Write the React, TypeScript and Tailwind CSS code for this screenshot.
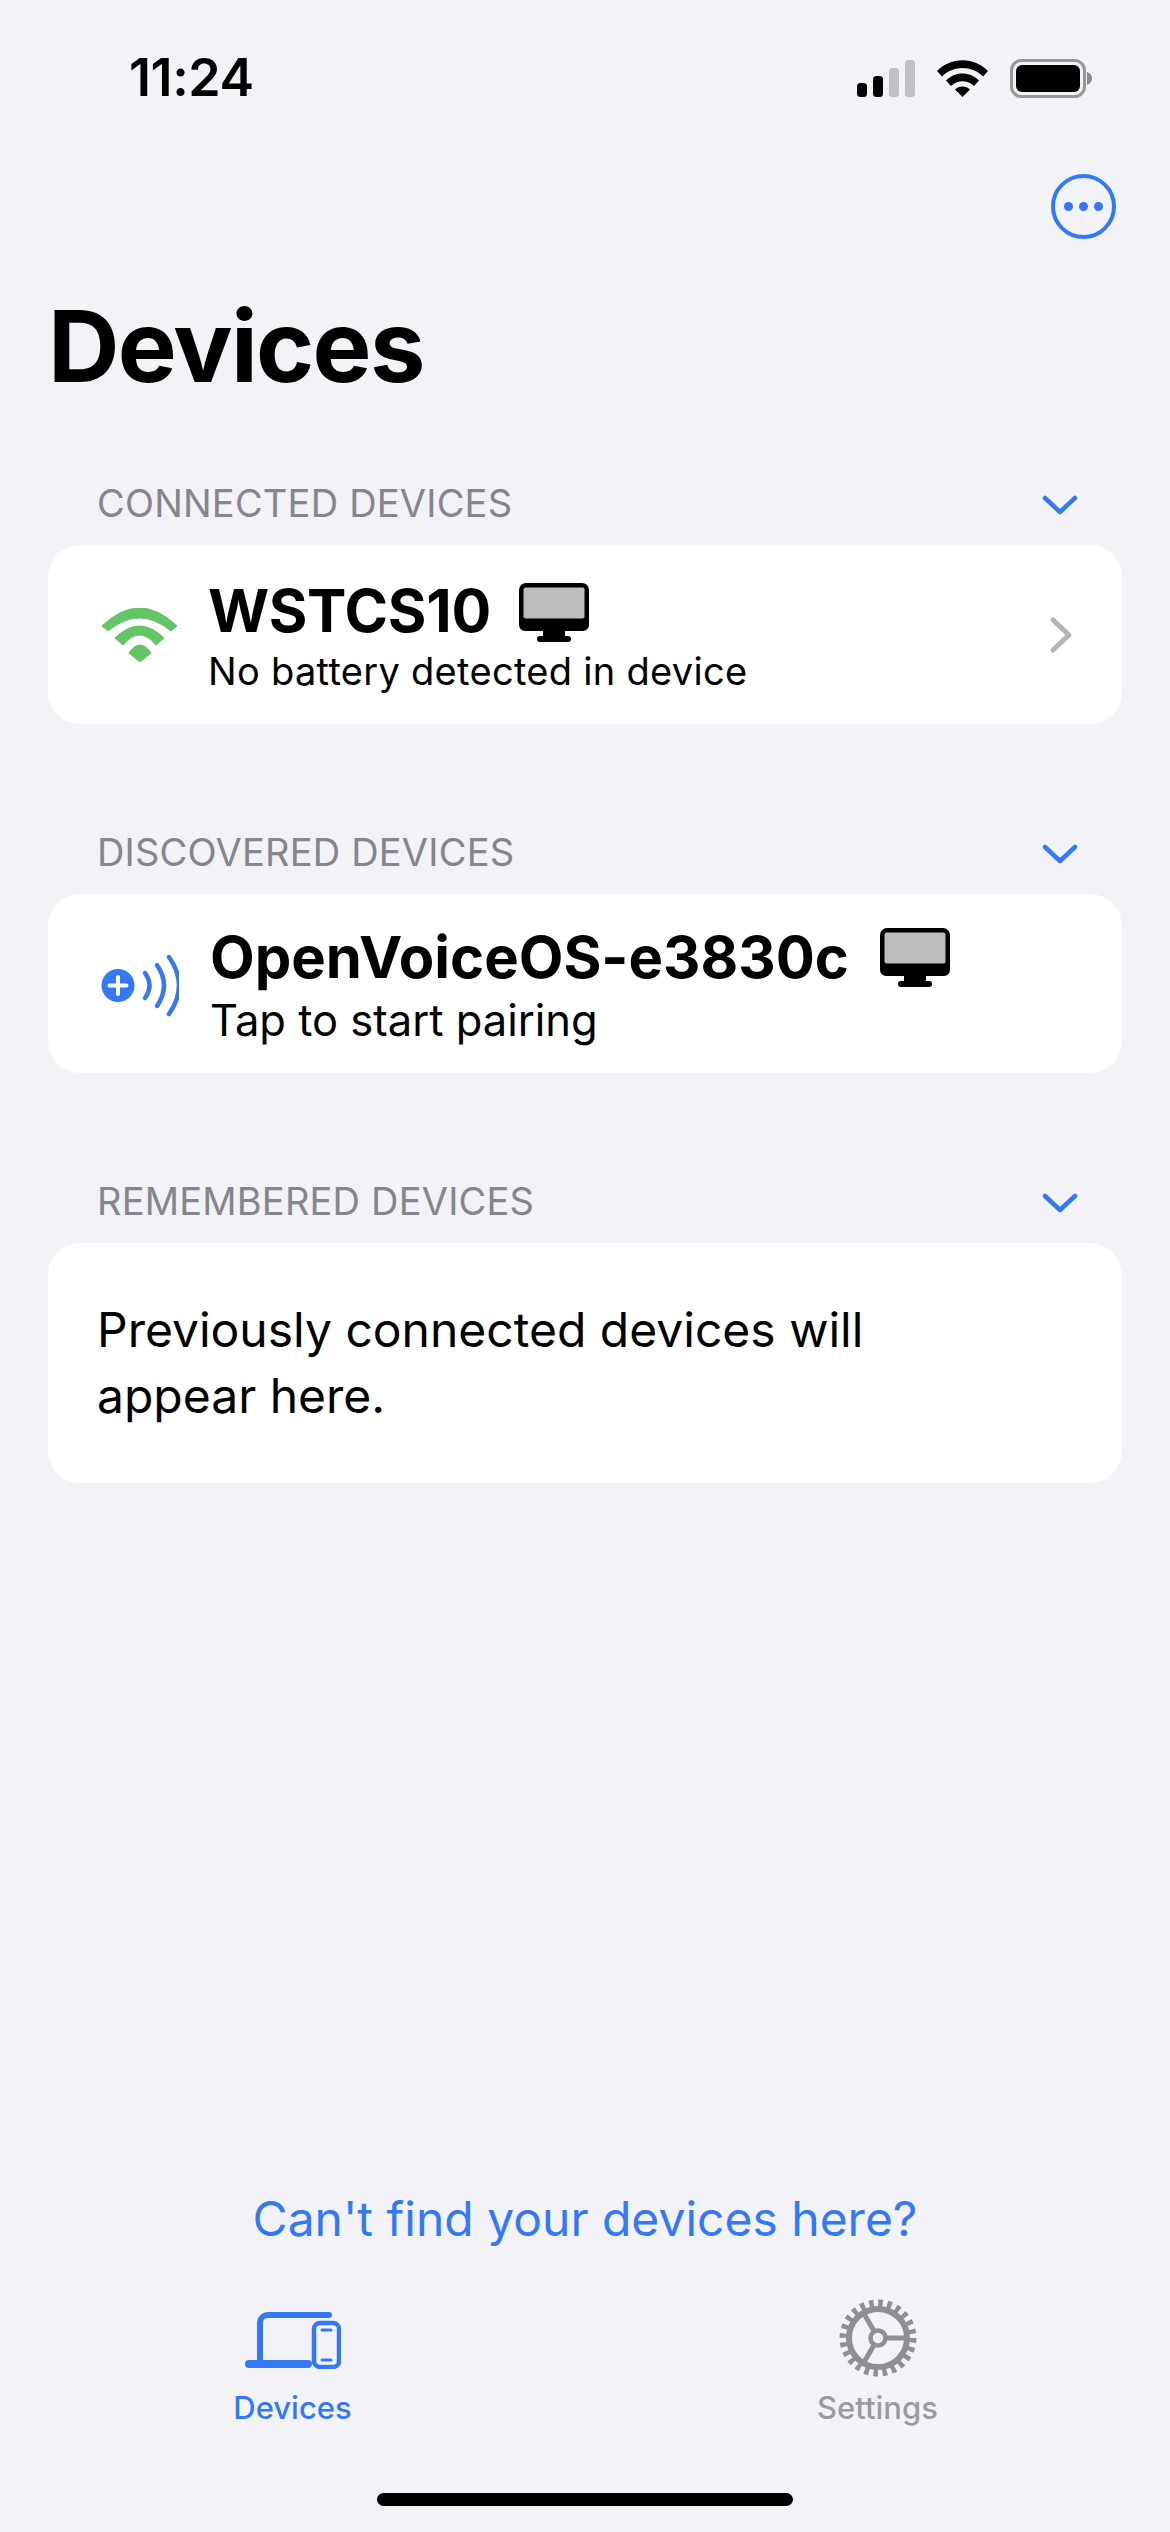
const BLUE = "#3478f6";

function Monitor({ className }: { className: string }) {
  return (
    <svg viewBox="0 0 70 59" className={className}>
      <path d="M7 0H63A7 7 0 0 1 70 7V42A6 6 0 0 1 64 48H46V53H49A3 3 0 0 1 49 59H21A3 3 0 0 1 21 53H24V48H6A6 6 0 0 1 0 42V7A7 7 0 0 1 7 0Z" fill="#000" />
      <rect x="4.500" y="4.500" width="61" height="31" rx="2" fill="#bdbdbd" />
    </svg>
  );
}

function Chevron() {
  return (
    <svg viewBox="0 0 36 22" className="w-[36px] h-[22px] mt-[4px]" fill="none" stroke={BLUE} strokeWidth="4.500" strokeLinecap="round" strokeLinejoin="round">
      <path d="M3 4L18 18L33 4" />
    </svg>
  );
}

function Section({ title, children }: { title: string; children: React.ReactNode }) {
  return (
    <section className="mx-[48px]">
      <div className="flex items-center justify-between pl-[49px] pr-[44px] h-[60px]">
        <span className="text-[38px] leading-[46px] text-[#85858b] tracking-[0.2px]">{title}</span>
        <Chevron />
      </div>
      <div className="bg-white rounded-[32px] mt-[12px]">{children}</div>
    </section>
  );
}

export default function App() {
  return (
    <div
      className="w-[1170px] h-[2532px] bg-[#f2f2f7] flex flex-col text-black overflow-hidden"
      style={{ fontFamily: "Inter, 'Noto Sans', sans-serif" }}
    >
      <header className="flex items-center justify-between h-[156px] pl-[129px] pr-[78px] shrink-0">
        <span className="text-[52px] leading-[60px] font-semibold tracking-[-0.4px]">11:24</span>
        <div className="flex items-center gap-[22px]">
          <svg viewBox="0 0 58 37" className="w-[58px] h-[37px]">
            <rect x="0" y="23" width="10" height="14" rx="3.500" fill="#000" />
            <rect x="16" y="16" width="10" height="21" rx="3.500" fill="#000" />
            <rect x="32" y="8" width="10" height="29" rx="3.500" fill="#c0c0c5" />
            <rect x="48" y="0" width="10" height="37" rx="3.500" fill="#c0c0c5" />
          </svg>
          <svg viewBox="0 0 51 37" className="w-[51px] h-[37px]">
            <path d="M0 11C14 -3.500 37 -3.500 51 11L46 16.500C35 5 16 5 5 16.500Z" fill="#000" />
            <path d="M9 20.500C18 11 33 11 42 20.500L37 26C31 19.500 20 19.500 14 26Z" fill="#000" />
            <path d="M18 29.500C22 25.500 29 25.500 33 29.500L25.500 37Z" fill="#000" />
          </svg>
          <svg viewBox="0 0 82 39" className="w-[82px] h-[39px]">
            <rect x="1.500" y="1.500" width="73" height="36" rx="10" fill="none" stroke="#98989a" strokeWidth="3" />
            <rect x="6" y="6" width="64" height="27" rx="6" fill="#000" />
            <path d="M77 13C80 14 82 16.500 82 19.500C82 22.500 80 25 77 26Z" fill="#8a8a8c" />
          </svg>
        </div>
      </header>

      <div className="flex justify-end pr-[54px] pt-[18px] shrink-0">
        <svg viewBox="0 0 65 65" className="w-[65px] h-[65px]">
          <circle cx="32.500" cy="32.500" r="30.500" fill="none" stroke={BLUE} strokeWidth="4" />
          <circle cx="17.500" cy="32.500" r="4.500" fill={BLUE} />
          <circle cx="32.500" cy="32.500" r="4.500" fill={BLUE} />
          <circle cx="47.500" cy="32.500" r="4.500" fill={BLUE} />
        </svg>
      </div>

      <h1 className="pl-[48px] mt-[45px] text-[99px] leading-[124px] font-bold tracking-[-1.7px] shrink-0">Devices</h1>

      <div className="mt-[65px] flex flex-col gap-[98px] shrink-0">
        <Section title="CONNECTED DEVICES">
          <div className="h-[179px] flex items-center">
            <svg viewBox="0 0 75 54" className="ml-[54px] w-[75px] h-[54px] shrink-0" fill="#65c466" stroke="#65c466" strokeWidth="1" strokeLinejoin="round">
              <path d="M0 18Q37.500 -18 75 18L69 23Q37.500 -3 6 23Z" />
              <path d="M13 30Q37.500 6 62 30L54 37Q37.500 17 21 37Z" />
              <path d="M27 45Q38 29 49 45L38 54Z" />
            </svg>
            <div className="ml-[31px] mb-[5px] flex-1 min-w-0 flex flex-col">
              <div className="flex items-center h-[78px]">
                <span className="text-[59px] leading-[78px] font-bold tracking-[-0.2px]">WSTCS10</span>
                <Monitor className="w-[70px] h-[59px] ml-[28px] mt-[3px]" />
              </div>
              <span className="text-[38px] leading-[42px] tracking-[0.3px]">No battery detected in device</span>
            </div>
            <svg viewBox="0 0 24 38" className="w-[24px] h-[38px] mr-[49px] shrink-0" fill="none" stroke="#b4b4b9" strokeWidth="5" strokeLinecap="round" strokeLinejoin="round">
              <path d="M4 4L20 19L4 34" />
            </svg>
          </div>
        </Section>

        <Section title="DISCOVERED DEVICES">
          <div className="h-[179px] flex items-center">
            <svg viewBox="0 0 78 63" className="ml-[53px] w-[78px] h-[63px] shrink-0 mt-[4px]">
              <circle cx="17" cy="31.500" r="16.500" fill={BLUE} />
              <path d="M17 23V40M8.500 31.500H25.500" stroke="#fff" strokeWidth="4" strokeLinecap="round" />
              <g fill="none" stroke={BLUE} strokeWidth="4.500" strokeLinecap="round">
                <path d="M44 19Q53 31.500 44 44" />
                <path d="M56 11Q70 31.500 56 52" />
                <path d="M68 3Q88 31.500 68 60" />
              </g>
            </svg>
            <div className="ml-[31px] mb-[11px] flex-1 min-w-0 flex flex-col">
              <div className="flex items-center h-[84px]">
                <span className="text-[58px] leading-[84px] font-bold whitespace-nowrap">OpenVoiceOS-e3830c</span>
                <Monitor className="w-[70px] h-[59px] ml-[31px] mt-[1px]" />
              </div>
              <span className="text-[43.500px] leading-[42px]">Tap to start pairing</span>
            </div>
          </div>
        </Section>

        <Section title="REMEMBERED DEVICES">
          <p className="h-[240px] px-[49px] py-[54px] text-[48px] leading-[66px]">
            Previously connected devices will
            <br />
            appear here.
          </p>
        </Section>
      </div>

      <div className="mt-auto flex flex-col items-center shrink-0">
        <a className="text-[48px] leading-[64px] text-[#3478f6]">Can't find your devices here?</a>
        <nav className="w-full grid grid-cols-2 mt-[53px]">
          <div className="flex flex-col items-center">
            <svg viewBox="0 0 96 57" className="w-[96px] h-[57px] mt-[8px]" fill="none" stroke={BLUE}>
              <path d="M15 50V10A8 8 0 0 1 23 3H84" strokeWidth="6" strokeLinecap="round" />
              <path d="M4 52H63" strokeWidth="8" strokeLinecap="round" />
              <rect x="69" y="11" width="25" height="44" rx="6" strokeWidth="4.500" />
              <path d="M77 18H86M77 48H86" strokeWidth="3" strokeLinecap="round" />
            </svg>
            <span className="text-[31px] leading-[36px] mt-[21px] font-medium text-[#3478f6]">Devices</span>
          </div>
          <div className="flex flex-col items-center">
            <svg viewBox="-39 -39 78 78" className="w-[78px] h-[78px] -mt-[5px]" fill="none" stroke="#8e8e93">
              <circle r="29" strokeWidth="6" />
              <circle r="34" strokeWidth="9" strokeDasharray="4.400 4.500" />
              <circle r="7.500" strokeWidth="4.500" />
              <path d="M8 0H30M-4 7L-15 26M-4 -7L-15 -26" strokeWidth="5" />
            </svg>
            <span className="text-[31px] leading-[36px] mt-[13px] font-medium text-[#9b9b9f]">Settings</span>
          </div>
        </nav>
        <div className="w-[416px] h-[13px] rounded-full bg-black mt-[67px] mb-[26px]" />
      </div>
    </div>
  );
}
